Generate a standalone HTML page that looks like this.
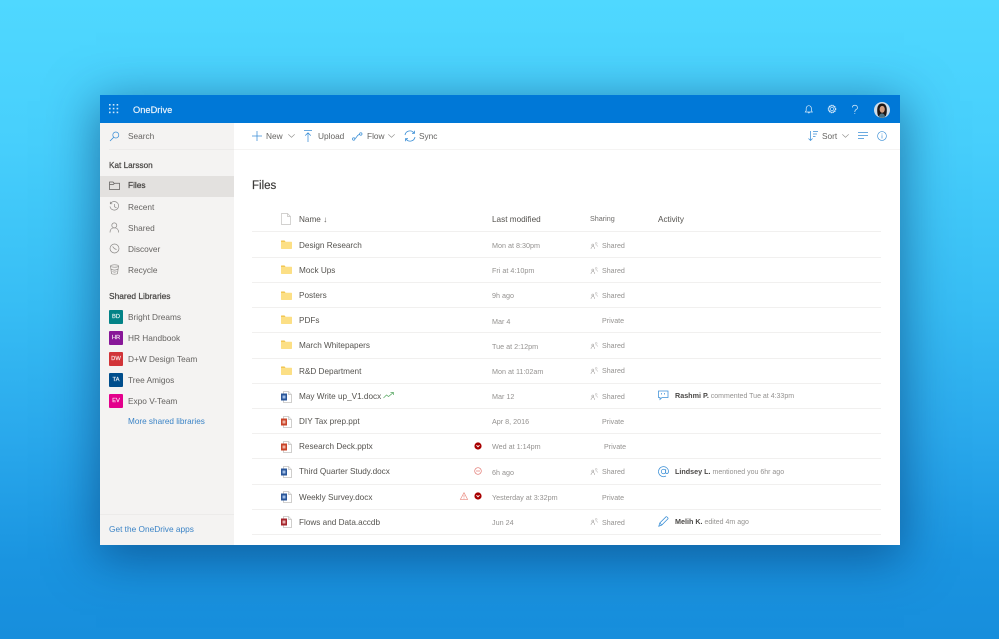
<!DOCTYPE html>
<html><head><meta charset="utf-8"><style>
html,body{margin:0;padding:0}
body{width:999px;height:639px;position:relative;overflow:hidden;background:linear-gradient(180deg,#4fd8ff 0%,#47cffc 22%,#37bdf4 48%,#2aa9ec 68%,#1a94e0 88%,#178edc 100%);font-family:"Liberation Sans",sans-serif;color:#3c3a38}
.shadow{position:absolute;left:100px;top:95px;width:800px;height:450px;box-shadow:0 10px 46px 4px rgba(0,40,95,.5)}
.win{position:absolute;left:100px;top:95px;width:800px;height:450px;background:#fff;overflow:hidden;filter:blur(.22px)}
.hd{position:absolute;left:0;top:0;width:800px;height:28px;background:#0078d7}
.side{position:absolute;left:0;top:28px;width:134px;height:422px;background:#f4f3f2}
.t{position:absolute;white-space:nowrap;line-height:12px}
svg{position:absolute;overflow:visible}
.n{font-size:8.2px;color:#55534f}
.s{font-size:8.3px;color:#656361}
.b{font-size:8.2px;color:#484644;-webkit-text-stroke:.22px #484644}
.d{font-size:7.2px;color:#949290}
.sh{font-size:7.1px;color:#949290}
.l{position:absolute;left:152px;width:629px;height:1px;background:#f1f0ef}
.a{position:absolute;left:9px;width:14px;height:14px;border-radius:1px;color:rgba(255,255,255,.85);font-size:5.8px;line-height:15px;text-align:center;-webkit-text-stroke:.15px #fff}
.ac{font-size:7px;color:#949290}
.ac b{color:#4a4846;font-size:7.2px}
</style></head><body>
<svg width="0" height="0" style="position:absolute"><defs>
<symbol id="fo" viewBox="0 0 11 9"><path d="M0 1.200Q0 .5.7.5h2.800l1 1.200h5.800q.7 0 .7.7V8.200q0 .8-.7.8H.7Q0 9 0 8.200z" fill="#fcdf85"/><path d="M0 1.200Q0 .5.7.5h2.800l1 1.200H0z" fill="#eebf45"/></symbol>
<symbol id="pp" viewBox="0 0 9 9"><circle cx="2.800" cy="4" r="1" fill="none" stroke="#a19f9d" stroke-width=".55"/><path d="M1 8c0-1.500.7-2.500 1.800-2.500s1.800 1 1.800 2.500" fill="none" stroke="#a19f9d" stroke-width=".55"/><circle cx="6.200" cy="2.300" r=".9" fill="none" stroke="#b5b3b1" stroke-width=".5"/><path d="M5.700 4c1.200-.2 2 .5 2.100 1.700" fill="none" stroke="#b5b3b1" stroke-width=".5"/></symbol>
<symbol id="doc" viewBox="0 0 12 12"><path d="M3.500.5h5l3 3v8h-8z" fill="#fff" stroke="#c4c2c0" stroke-width=".8"/><path d="M8.500.5v3h3" fill="#eee" stroke="#c4c2c0" stroke-width=".7"/></symbol>
</defs></svg>
<div class="shadow"></div>
<div class="win">
<div class="hd"></div>
<svg style="left:9px;top:9px" width="10" height="10" fill="#cfe6fa"><rect x="0" y="0" width="1.600" height="1.600"/><rect x="3.800" y="0" width="1.600" height="1.600"/><rect x="7.600" y="0" width="1.600" height="1.600"/><rect x="0" y="3.800" width="1.600" height="1.600"/><rect x="3.800" y="3.800" width="1.600" height="1.600"/><rect x="7.600" y="3.800" width="1.600" height="1.600"/><rect x="0" y="7.600" width="1.600" height="1.600"/><rect x="3.800" y="7.600" width="1.600" height="1.600"/><rect x="7.600" y="7.600" width="1.600" height="1.600"/></svg>
<div class="t" style="left:33px;top:9px;font-size:9.3px;color:#f0f7fd;-webkit-text-stroke:.15px #f0f7fd">OneDrive</div>
<svg style="left:705px;top:10px" width="8" height="9" fill="none" stroke="#dcedfb" stroke-width=".7"><path d="M.3 7h7L6.400 5.500V3.300a2.600 2.600 0 0 0-5.200 0v2.200zM3 7.500a.9.900 0 0 0 1.600 0"/></svg>
<svg style="left:727px;top:9px" width="10" height="10" viewBox="0 0 11 11" fill="none" stroke="#dcedfb" stroke-width=".7"><circle cx="5.500" cy="5.500" r="1.800"/><circle cx="5.500" cy="5.500" r="4.100" stroke-width="1.200" stroke-dasharray="1.300 .9"/><circle cx="5.500" cy="5.500" r="3.500"/></svg>
<svg style="left:752px;top:10px" width="6" height="10" fill="none" stroke="#dcedfb" stroke-width=".7"><path d="M.4 2.500a2.500 2.300 0 1 1 3.600 2.100C3 5.200 2.800 5.700 2.800 7"/><circle cx="2.800" cy="8.600" r=".45" fill="#dcedfb" stroke="none"/></svg>
<svg style="left:774px;top:7px" width="16" height="16" viewBox="0 0 16 16"><circle cx="8" cy="8" r="8" fill="#cfdde8"/><path d="M8 1.500C4.500 1.500 3.200 4.500 3.200 8c0 3 .3 4.800 1.200 6.300h7.200c.9-1.500 1.200-3.300 1.200-6.300 0-3.500-1.300-6.500-4.800-6.500z" fill="#1d1614"/><ellipse cx="8.200" cy="7.300" rx="2.600" ry="3.400" fill="#cf9d80"/><path d="M4.800 15.200c.3-2.500 1.700-3.700 3.200-3.700s2.900 1.200 3.200 3.700A8 8 0 0 1 4.800 15.200z" fill="#4a7488"/></svg>

<div class="side"></div>
<div style="position:absolute;left:134px;top:54px;width:666px;height:1px;background:#f5f4f3"></div>
<div style="position:absolute;left:9px;top:54px;width:125px;height:1px;background:#ecebea"></div>
<div style="position:absolute;left:0;top:81px;width:134px;height:21px;background:#e3e1df"></div>
<div style="position:absolute;left:0;top:419px;width:134px;height:1px;background:#ecebea"></div>

<svg style="left:9px;top:36px" width="11" height="11" fill="none" stroke="#3b8fd6" stroke-width=".75"><circle cx="6.800" cy="4" r="3"/><path d="M4.700 6.300 1 10"/></svg>
<div class="t s" style="left:28px;top:35px">Search</div>
<div class="t b" style="left:9px;top:65px">Kat Larsson</div>
<svg style="left:9px;top:86px" width="11" height="10" fill="none" stroke="#605e5c" stroke-width=".75"><path d="M.5 8.500V1h3.500l1 1.200h5.500v6.300zM.5 3.400h4l1-1.200"/></svg>
<div class="t" style="left:28px;top:84px;font-size:8.3px;color:#484644;-webkit-text-stroke:.25px #484644">Files</div>
<svg style="left:9px;top:106px" width="11" height="11" fill="none" stroke="#8a8886" stroke-width=".7"><path d="M1.600 2.500A4.300 4.300 0 1 1 1 5.500M1.300 .8v2h2M5.500 3v2.800l2 1"/></svg>
<div class="t s" style="left:28px;top:106px">Recent</div>
<svg style="left:9px;top:127px" width="11" height="11" fill="none" stroke="#8a8886" stroke-width=".7"><circle cx="5.300" cy="3.400" r="2.500"/><path d="M1 10.500c0-3 1.800-4.700 4.300-4.700s4.300 1.700 4.300 4.700"/></svg>
<div class="t s" style="left:28px;top:127px">Shared</div>
<svg style="left:9px;top:148px" width="11" height="11" fill="none" stroke="#8a8886" stroke-width=".7"><circle cx="5.500" cy="5.500" r="4.500"/><path d="M3.600 3.500 5.500 5.700l2 .8"/></svg>
<div class="t s" style="left:28px;top:148px">Discover</div>
<svg style="left:9px;top:169px" width="11" height="11" fill="none" stroke="#8a8886" stroke-width=".7"><ellipse cx="5.500" cy="2" rx="4" ry="1.200"/><path d="M1.500 2l1 7.500c.5.900 5.500.9 6 0l1-7.500M2 5c2 1.500 5 1.500 7 0M3.500 7.500c1.200.8 2.800.8 4 0"/></svg>
<div class="t s" style="left:28px;top:169px">Recycle</div>
<div class="t b" style="left:9px;top:195px;font-size:8.4px">Shared Libraries</div>
<div class="a" style="top:215px;background:#038387">BD</div><div class="t s" style="left:28px;top:216px">Bright Dreams</div>
<div class="a" style="top:236px;background:#881798">HR</div><div class="t s" style="left:28px;top:237px">HR Handbook</div>
<div class="a" style="top:257px;background:#d13438">DW</div><div class="t s" style="left:28px;top:258px">D+W Design Team</div>
<div class="a" style="top:278px;background:#004e8c">TA</div><div class="t s" style="left:28px;top:279px">Tree Amigos</div>
<div class="a" style="top:299px;background:#e3008c">EV</div><div class="t s" style="left:28px;top:300px">Expo V-Team</div>
<div class="t" style="left:28px;top:321px;font-size:8.2px;color:#3a83c6">More shared libraries</div>
<div class="t" style="left:9px;top:428px;font-size:8.3px;color:#3a83c6">Get the OneDrive apps</div>

<svg style="left:152px;top:36px" width="10" height="10" stroke="#3b8fd6" stroke-width=".75"><path d="M5 0v10M0 5h10"/></svg>
<div class="t s" style="left:166px;top:35px">New</div>
<svg style="left:188px;top:39px" width="7" height="4" fill="none" stroke="#8a8886" stroke-width=".65"><path d="M.3.300 3.500 3.300 6.700.300"/></svg>
<svg style="left:204px;top:35px" width="8" height="12" fill="none" stroke="#3b8fd6" stroke-width=".75"><path d="M0 .5h8M4 3v9M1.200 5.600 4 2.800l2.800 2.800"/></svg>
<div class="t s" style="left:218px;top:35px">Upload</div>
<svg style="left:252px;top:37px" width="11" height="9" fill="none" stroke="#3b8fd6" stroke-width=".75"><circle cx="1.700" cy="7" r="1.200"/><circle cx="8.800" cy="2" r="1.200"/><path d="M3 6.500C5 6 4.500 3 7.500 2.500"/></svg>
<div class="t s" style="left:267px;top:35px">Flow</div>
<svg style="left:288px;top:39px" width="7" height="4" fill="none" stroke="#8a8886" stroke-width=".65"><path d="M.3.300 3.500 3.300 6.700.300"/></svg>
<svg style="left:304px;top:35px" width="12" height="12" fill="none" stroke="#3b8fd6" stroke-width=".8"><path d="M1 5A5 5 0 0 1 10 3M11 7A5 5 0 0 1 2 9M10.500 .8V3.300H8M1.500 11.200V8.700H4"/></svg>
<div class="t s" style="left:319px;top:35px">Sync</div>
<svg style="left:708px;top:36px" width="11" height="10" fill="none" stroke="#3b8fd6" stroke-width=".75"><path d="M2.500 0v9.500M.5 7.500l2 2 2-2M5 .5h5M5 3h4M5 5.500h2.500"/></svg>
<div class="t s" style="left:722px;top:35px">Sort</div>
<svg style="left:742px;top:39px" width="7" height="4" fill="none" stroke="#8a8886" stroke-width=".65"><path d="M.3.300 3.500 3.300 6.700.300"/></svg>
<svg style="left:758px;top:37px" width="10" height="8" stroke="#3b8fd6" stroke-width=".75"><path d="M0 .5h10M0 3.500h10M0 6.500h6"/></svg>
<svg style="left:777px;top:36px" width="10" height="10" fill="none" stroke="#3b8fd6" stroke-width=".65"><circle cx="5" cy="5" r="4.400"/><path d="M5 4.300v3.200M5 2.500v1"/></svg>

<div class="t" style="left:152px;top:84px;font-size:11.5px;line-height:14px;color:#3c3a38;-webkit-text-stroke:.18px #3c3a38">Files</div>
<svg style="left:181px;top:118px" width="10" height="12" fill="none" stroke="#c4c2c0" stroke-width=".7"><path d="M.5.500h6l3 3v8h-9zM6.500.500v3h3"/></svg>
<div class="t n" style="left:199px;top:119px">Name ↓</div>
<div class="t n" style="left:392px;top:119px">Last modified</div>
<div class="t" style="left:490px;top:118px;font-size:7.2px;color:#6f6d6b">Sharing</div>
<div class="t n" style="left:558px;top:119px">Activity</div>

<div class="l" style="top:136px"></div><div class="l" style="top:162px"></div><div class="l" style="top:187px"></div><div class="l" style="top:212px"></div><div class="l" style="top:237px"></div><div class="l" style="top:263px"></div><div class="l" style="top:288px"></div><div class="l" style="top:313px"></div><div class="l" style="top:338px"></div><div class="l" style="top:363px"></div><div class="l" style="top:389px"></div><div class="l" style="top:414px"></div><div class="l" style="top:439px"></div>

<svg style="left:181px;top:145px" width="11" height="9"><use href="#fo"/></svg><div class="t n" style="left:199px;top:145px">Design Research</div><div class="t d" style="left:392px;top:145px">Mon at 8:30pm</div><svg style="left:490px;top:146px" width="9" height="9"><use href="#pp"/></svg><div class="t sh" style="left:502px;top:145px">Shared</div>
<svg style="left:181px;top:170px" width="11" height="9"><use href="#fo"/></svg><div class="t n" style="left:199px;top:170px">Mock Ups</div><div class="t d" style="left:392px;top:170px">Fri at 4:10pm</div><svg style="left:490px;top:171px" width="9" height="9"><use href="#pp"/></svg><div class="t sh" style="left:502px;top:170px">Shared</div>
<svg style="left:181px;top:196px" width="11" height="9"><use href="#fo"/></svg><div class="t n" style="left:199px;top:195px">Posters</div><div class="t d" style="left:392px;top:195px">9h ago</div><svg style="left:490px;top:196px" width="9" height="9"><use href="#pp"/></svg><div class="t sh" style="left:502px;top:195px">Shared</div>
<svg style="left:181px;top:220px" width="11" height="9"><use href="#fo"/></svg><div class="t n" style="left:199px;top:220px">PDFs</div><div class="t d" style="left:392px;top:221px">Mar 4</div><div class="t sh" style="left:502px;top:220px">Private</div>
<svg style="left:181px;top:245px" width="11" height="9"><use href="#fo"/></svg><div class="t n" style="left:199px;top:245px">March Whitepapers</div><div class="t d" style="left:392px;top:246px">Tue at 2:12pm</div><svg style="left:490px;top:246px" width="9" height="9"><use href="#pp"/></svg><div class="t sh" style="left:502px;top:245px">Shared</div>
<svg style="left:181px;top:271px" width="11" height="9"><use href="#fo"/></svg><div class="t n" style="left:199px;top:271px">R&amp;D Department</div><div class="t d" style="left:392px;top:271px">Mon at 11:02am</div><svg style="left:490px;top:271px" width="9" height="9"><use href="#pp"/></svg><div class="t sh" style="left:502px;top:270px">Shared</div>

<svg style="left:180px;top:296px" width="12" height="12"><use href="#doc"/><rect x="1" y="2.500" width="6" height="7" fill="#2b579a"/><rect x="2.500" y="4.500" width="3" height="3" fill="#9fbde6"/></svg><div class="t n" style="left:199px;top:296px">May Write up_V1.docx</div><svg style="left:283px;top:297px" width="11" height="7" fill="none" stroke="#5aa964" stroke-width=".7"><path d="M.5 6 3.500 3l2 1.500L10 .8M7.500.5h3v2.500"/></svg><div class="t d" style="left:392px;top:296px">Mar 12</div><svg style="left:490px;top:297px" width="9" height="9"><use href="#pp"/></svg><div class="t sh" style="left:502px;top:296px">Shared</div>
<svg style="left:558px;top:295px" width="11" height="11" fill="none" stroke="#3b8fd6" stroke-width=".75"><path d="M.5 1h9.500v6.500H4L2 9.500v-2H.5z"/><path d="M3.500 3v1.500M6.500 3v1.500"/></svg><div class="t ac" style="left:575px;top:295px"><b>Rashmi P.</b> commented Tue at 4:33pm</div>

<svg style="left:180px;top:321px" width="12" height="12"><use href="#doc"/><rect x="1" y="2.500" width="6" height="7" fill="#c9452a"/><rect x="2.500" y="4.500" width="3" height="3" fill="#eeb3a3"/></svg><div class="t n" style="left:199px;top:321px">DIY Tax prep.ppt</div><div class="t d" style="left:392px;top:321px">Apr 8, 2016</div><div class="t sh" style="left:502px;top:321px">Private</div>

<svg style="left:180px;top:346px" width="12" height="12"><use href="#doc"/><rect x="1" y="2.500" width="6" height="7" fill="#c9452a"/><rect x="2.500" y="4.500" width="3" height="3" fill="#eeb3a3"/></svg><div class="t n" style="left:199px;top:346px">Research Deck.pptx</div><svg style="left:374px;top:347px" width="8" height="8"><circle cx="4" cy="4" r="3.600" fill="#a80000"/><path d="M2.500 3.200 4 4.800l1.500-1.600" fill="none" stroke="#fff" stroke-width=".9"/></svg><div class="t d" style="left:392px;top:346px">Wed at 1:14pm</div><div class="t sh" style="left:504px;top:346px">Private</div>

<svg style="left:180px;top:371px" width="12" height="12"><use href="#doc"/><rect x="1" y="2.500" width="6" height="7" fill="#2b579a"/><rect x="2.500" y="4.500" width="3" height="3" fill="#9fbde6"/></svg><div class="t n" style="left:199px;top:371px">Third Quarter Study.docx</div><svg style="left:374px;top:372px" width="8" height="8" fill="none" stroke="#e0706a" stroke-width=".65"><circle cx="4" cy="4" r="3.300"/><path d="M2 4h4"/></svg><div class="t d" style="left:392px;top:372px">6h ago</div><svg style="left:490px;top:372px" width="9" height="9"><use href="#pp"/></svg><div class="t sh" style="left:502px;top:371px">Shared</div>
<svg style="left:558px;top:371px" width="11" height="11" fill="none" stroke="#3b8fd6" stroke-width=".75"><circle cx="5.500" cy="5.500" r="2.200"/><path d="M7.700 3.300V6.500c0 1.700 2.800 1.500 2.800-1A5 5 0 1 0 8 10"/></svg><div class="t ac" style="left:575px;top:371px"><b>Lindsey L.</b> mentioned you 6hr ago</div>

<svg style="left:180px;top:396px" width="12" height="12"><use href="#doc"/><rect x="1" y="2.500" width="6" height="7" fill="#2b579a"/><rect x="2.500" y="4.500" width="3" height="3" fill="#9fbde6"/></svg><div class="t n" style="left:199px;top:397px">Weekly Survey.docx</div><svg style="left:360px;top:397px" width="8" height="8" fill="none" stroke="#e8857a" stroke-width=".65"><path d="M4 .7 7.600 7.400H.4zM4 3v2.500M4 6v.6"/></svg><svg style="left:374px;top:397px" width="8" height="8"><circle cx="4" cy="4" r="3.600" fill="#a80000"/><path d="M2.500 3.200 4 4.800l1.500-1.600" fill="none" stroke="#fff" stroke-width=".9"/></svg><div class="t d" style="left:392px;top:397px">Yesterday at 3:32pm</div><div class="t sh" style="left:502px;top:397px">Private</div>

<svg style="left:180px;top:421px" width="12" height="12"><use href="#doc"/><rect x="1" y="2.500" width="6" height="7" fill="#a4262c"/><rect x="2.500" y="4.500" width="3" height="3" fill="#e8b0b0"/></svg><div class="t n" style="left:199px;top:422px">Flows and Data.accdb</div><div class="t d" style="left:392px;top:422px">Jun 24</div><svg style="left:490px;top:422px" width="9" height="9"><use href="#pp"/></svg><div class="t sh" style="left:502px;top:422px">Shared</div>
<svg style="left:558px;top:421px" width="11" height="11" fill="none" stroke="#3b8fd6" stroke-width=".75"><path d="M.8 10.200 1.800 7 8 .8c.6-.5 2.500 1.300 2 2L3.800 9z"/><path d="M1.800 7 3.800 9"/></svg><div class="t ac" style="left:575px;top:421px"><b>Melih K.</b> edited 4m ago</div>
</div>
</body></html>
